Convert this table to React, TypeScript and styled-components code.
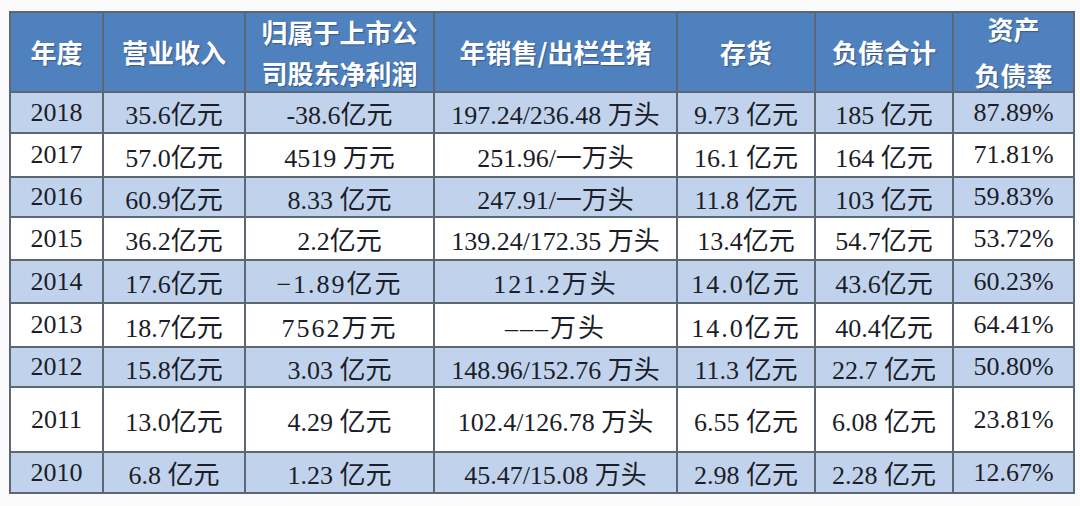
import React from "react";
import styled, { createGlobalStyle } from "styled-components";

const GlobalStyle = createGlobalStyle`
  html, body {
    margin: 0;
    padding: 0;
    background: #fbfbfc;
  }
`;

const Table = styled.div`
  margin: 11px 0 0 9px;
  width: 1066px;
  display: grid;
  grid-template-columns: 91px 140px 187px 241px 136px 136px 119px;
  grid-template-rows: 78px 39px 42px 38px 41px 41px 42px 38px 63px 39px;
  gap: 2px;
  padding: 2px;
  box-sizing: border-box;
  background: #5d6774;
`;

const HeadCell = styled.div<{ $lh?: number }>`
  background: #4f81bf;
  color: #ffffff;
  font-family: "Noto Sans CJK SC", "Microsoft YaHei", sans-serif;
  font-size: 26px;
  font-weight: 700;
  line-height: ${(p) => p.$lh ?? 34}px;
  text-shadow: 1px 1px 1px rgba(20, 40, 80, 0.45);
  display: flex;
  align-items: center;
  justify-content: center;
  text-align: center;
  white-space: pre-line;
`;

const Cell = styled.div<{ $shade: boolean; $song?: boolean }>`
  background: ${(p) => (p.$shade ? "#c1d3ec" : "#ffffff")};
  color: #1b1d28;
  font-family: "Liberation Serif", "Noto Sans CJK SC", serif;
  font-size: 26px;
  font-weight: 400;
  letter-spacing: ${(p) => (p.$song ? "2px" : "0")};
  display: flex;
  align-items: center;
  justify-content: center;
  white-space: nowrap;
`;

type Row = { cells: string[]; song?: number[] };

const headers: { text: string; lh?: number }[] = [
  { text: "年度" },
  { text: "营业收入" },
  { text: "归属于上市公\n司股东净利润", lh: 41 },
  { text: "年销售/出栏生猪" },
  { text: "存货" },
  { text: "负债合计" },
  { text: "资产\n负债率", lh: 46 },
];

const rows: Row[] = [
  { cells: ["2018", "35.6亿元", "-38.6亿元", "197.24/236.48 万头", "9.73 亿元", "185 亿元", "87.89%"] },
  { cells: ["2017", "57.0亿元", "4519 万元", "251.96/一万头", "16.1 亿元", "164 亿元", "71.81%"] },
  { cells: ["2016", "60.9亿元", "8.33 亿元", "247.91/一万头", "11.8 亿元", "103 亿元", "59.83%"] },
  { cells: ["2015", "36.2亿元", "2.2亿元", "139.24/172.35 万头", "13.4亿元", "54.7亿元", "53.72%"] },
  { cells: ["2014", "17.6亿元", "−1.89亿元", "121.2万头", "14.0亿元", "43.6亿元", "60.23%"], song: [2, 3, 4] },
  { cells: ["2013", "18.7亿元", "7562万元", "–––万头", "14.0亿元", "40.4亿元", "64.41%"], song: [2, 3, 4] },
  { cells: ["2012", "15.8亿元", "3.03 亿元", "148.96/152.76 万头", "11.3 亿元", "22.7 亿元", "50.80%"] },
  { cells: ["2011", "13.0亿元", "4.29 亿元", "102.4/126.78 万头", "6.55 亿元", "6.08 亿元", "23.81%"] },
  { cells: ["2010", "6.8 亿元", "1.23 亿元", "45.47/15.08 万头", "2.98 亿元", "2.28 亿元", "12.67%"] },
];

export default function App() {
  return (
    <>
      <GlobalStyle />
      <Table>
        {headers.map((h) => (
          <HeadCell key={h.text} $lh={h.lh}>
            {h.text}
          </HeadCell>
        ))}
        {rows.map((row, r) =>
          row.cells.map((text, c) => (
            <Cell
              key={`${r}-${c}`}
              $shade={r % 2 === 0}
              $song={row.song?.includes(c)}
            >
              {text}
            </Cell>
          ))
        )}
      </Table>
    </>
  );
}
